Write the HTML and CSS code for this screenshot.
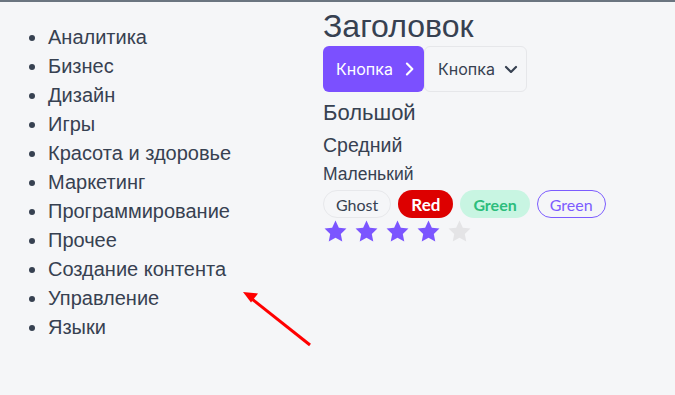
FILE: index.html
```html
<!DOCTYPE html>
<html lang="ru">
<head>
  <meta charset="UTF-8" />
  <title>Компоненты</title>
  <meta name="viewport" content="width=device-width, initial-scale=1.0" />
  <link rel="stylesheet" href="styles.css">
</head>
<body>
  <div class="page">
    <ul class="cats">
      <li>Аналитика</li>
      <li>Бизнес</li>
      <li>Дизайн</li>
      <li>Игры</li>
      <li>Красота и здоровье</li>
      <li>Маркетинг</li>
      <li>Программирование</li>
      <li>Прочее</li>
      <li>Создание контента</li>
      <li>Управление</li>
      <li>Языки</li>
    </ul>

    <div class="demo">
      <h1 class="title">Заголовок</h1>
      <div class="buttons">
        <button class="btn btn-primary">Кнопка
          <svg width="20" height="20" viewBox="0 0 24 24" fill="none" stroke="currentColor" stroke-width="2.6" stroke-linecap="round" stroke-linejoin="round"><path d="M9.5 5.5l6.5 6.5-6.5 6.5"/></svg>
        </button>
        <button class="btn btn-light">Кнопка
          <svg width="20" height="20" viewBox="0 0 24 24" fill="none" stroke="currentColor" stroke-width="2.6" stroke-linecap="round" stroke-linejoin="round"><path d="M6 9.5l6 6 6-6"/></svg>
        </button>
      </div>
      <div class="txt-lg">Большой</div>
      <div class="txt-md">Средний</div>
      <div class="txt-sm">Маленький</div>
      <div class="badges">
        <span class="badge ghost">Ghost</span>
        <span class="badge red">Red</span>
        <span class="badge green">Green</span>
        <span class="badge outline">Green</span>
      </div>
      <div class="stars">
        <svg class="star on" viewBox="0 0 24 24"><path d="M12 1.5l3.2 6.8 7.3.9-5.4 5.1 1.4 7.3L12 18l-6.5 3.6 1.4-7.3L1.5 9.2l7.3-.9z"/></svg>
        <svg class="star on" viewBox="0 0 24 24"><path d="M12 1.5l3.2 6.8 7.3.9-5.4 5.1 1.4 7.3L12 18l-6.5 3.6 1.4-7.3L1.5 9.2l7.3-.9z"/></svg>
        <svg class="star on" viewBox="0 0 24 24"><path d="M12 1.5l3.2 6.8 7.3.9-5.4 5.1 1.4 7.3L12 18l-6.5 3.6 1.4-7.3L1.5 9.2l7.3-.9z"/></svg>
        <svg class="star on" viewBox="0 0 24 24"><path d="M12 1.5l3.2 6.8 7.3.9-5.4 5.1 1.4 7.3L12 18l-6.5 3.6 1.4-7.3L1.5 9.2l7.3-.9z"/></svg>
        <svg class="star" viewBox="0 0 24 24"><path d="M12 1.5l3.2 6.8 7.3.9-5.4 5.1 1.4 7.3L12 18l-6.5 3.6 1.4-7.3L1.5 9.2l7.3-.9z"/></svg>
      </div>
    </div>
  </div>

  <!-- стрелка-пометка поверх страницы -->
  <svg class="arrow" width="675" height="395" viewBox="0 0 675 395">
    <line x1="310" y1="345" x2="252" y2="299" stroke="#f00" stroke-width="3" />
    <path d="M243 292l15 1.5-7 9z" fill="#f00" />
  </svg>
</body>
</html>
```

FILE: styles.css
```css
* {
  box-sizing: border-box;
}

body {
  margin: 0;
  background: #f5f6f8;
  border-top: 2px solid #6b7580;
  color: #374151;
  font-family: "Liberation Sans", Arial, sans-serif;
  height: 395px;
  overflow: hidden;
}

.page {
  display: grid;
  grid-template-columns: 323px 1fr;
  padding-top: 4px;
}

.cats {
  margin: 17px 0 0;
  padding-left: 48px;
  font-size: 20px;
  line-height: 29px;
}

.demo {
  display: flex;
  flex-direction: column;
  align-items: flex-start;
}

.title {
  margin: 0;
  font-size: 32px;
  font-weight: normal;
  line-height: 40px;
}

.buttons {
  display: flex;
}

.btn {
  display: flex;
  align-items: center;
  gap: 6px;
  height: 46px;
  padding: 0 0 0 13px;
  font-family: Inter, sans-serif;
  font-size: 16px;
  border-radius: 6px;
  cursor: pointer;
}

.btn svg {
  flex-shrink: 0;
}

.btn-primary {
  width: 101px;
  background: #7b50ff;
  color: #fff;
  border: none;
}

.btn-light {
  width: 103px;
  padding-left: 13px;
  background: #f5f6f8;
  color: #374151;
  border: 1px solid #e6e7ea;
}

.txt-lg {
  font-size: 22px;
  line-height: 26px;
  margin-top: 8px;
}

.txt-md {
  font-size: 19.5px;
  line-height: 24px;
  margin-top: 7px;
}

.txt-sm {
  font-size: 17.5px;
  line-height: 22px;
  margin-top: 6px;
}

.badges {
  display: flex;
  gap: 7px;
  margin-top: 5px;
}

.badge {
  display: flex;
  align-items: center;
  height: 28px;
  padding: 0 12px;
  border-radius: 14px;
  font-family: Lato, sans-serif;
  font-size: 16px;
  border: 1px solid transparent;
}

.ghost {
  border-color: #e7e8eb;
  color: #374151;
}

.red {
  background: #dd0000;
  color: #fff;
  font-weight: bold;
  font-size: 17px;
}

.green {
  background: #c8f5e2;
  color: #2dbd7c;
  font-weight: bold;
}

.outline {
  border-color: #7c5cff;
  color: #7c5cff;
}

.stars {
  display: flex;
  gap: 6px;
  margin-top: 1px;
}

.star {
  width: 25px;
  height: 25px;
  fill: #e4e4e6;
}

.star.on {
  fill: #7b55ff;
}

.arrow {
  position: absolute;
  top: 0;
  left: 0;
  pointer-events: none;
}
```
